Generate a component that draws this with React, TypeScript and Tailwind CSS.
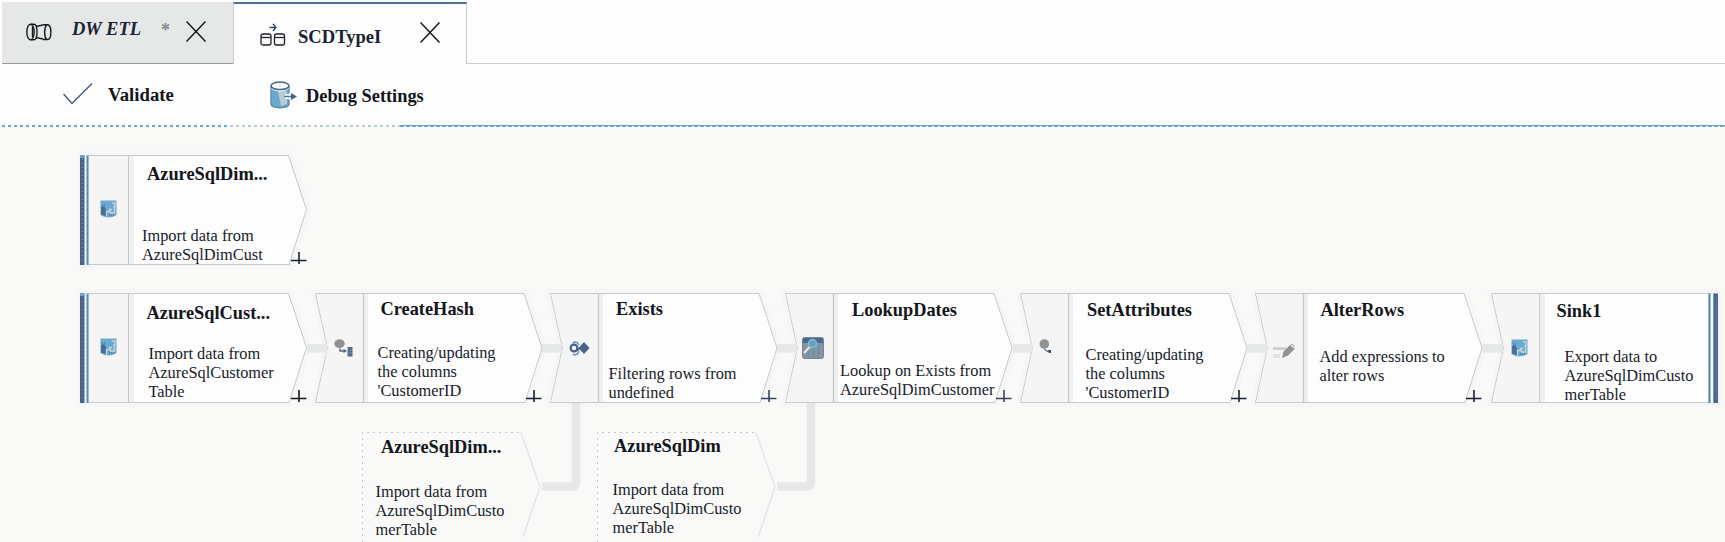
import React from "react";

type IconKind = "sql" | "derive" | "exists" | "lookup" | "set" | "alter" | "none";
type Shape = "source" | "step" | "sink" | "ref";

interface FlowNode {
  id: string;
  shape: Shape;
  x: number;
  y: number;
  title: string;
  tx: number;
  ty: number;
  lines: string[];
  bx: number;
  by: number;
  icon: IconKind;
  plus?: string;
}

const NODES: FlowNode[] = [
  { id: "dim", shape: "source", x: 80, y: 155, title: "AzureSqlDim...", tx: 67, ty: 25, lines: ["Import data from", "AzureSqlDimCust"], bx: 62, by: 86, icon: "sql", plus: "#1b1f2a" },
  { id: "cust", shape: "source", x: 80, y: 293, title: "AzureSqlCust...", tx: 66.5, ty: 26, lines: ["Import data from", "AzureSqlCustomer", "Table"], bx: 68.5, by: 66, icon: "sql", plus: "#14161c" },
  { id: "hash", shape: "step", x: 315, y: 293, title: "CreateHash", tx: 65.5, ty: 22, lines: ["Creating/updating", "the columns", "'CustomerID"], bx: 62.5, by: 65, icon: "derive", plus: "#1b2233" },
  { id: "exists", shape: "step", x: 550, y: 293, title: "Exists", tx: 66, ty: 22, lines: ["Filtering rows from", "undefined"], bx: 58.5, by: 86, icon: "exists", plus: "#35445f" },
  { id: "lookup", shape: "step", x: 785, y: 293, title: "LookupDates", tx: 67, ty: 23, lines: ["Lookup on Exists from", "AzureSqlDimCustomer"], bx: 55, by: 83, icon: "lookup", plus: "#35445f" },
  { id: "set", shape: "step", x: 1020, y: 293, title: "SetAttributes", tx: 67, ty: 23, lines: ["Creating/updating", "the columns", "'CustomerID"], bx: 65.5, by: 67, icon: "set", plus: "#1b2233" },
  { id: "alter", shape: "step", x: 1255, y: 293, title: "AlterRows", tx: 65.5, ty: 23, lines: ["Add expressions to", "alter rows"], bx: 64.5, by: 69, icon: "alter", plus: "#1b2233" },
  { id: "sink", shape: "sink", x: 1490.5, y: 293, title: "Sink1", tx: 66, ty: 23.5, lines: ["Export data to", "AzureSqlDimCusto", "merTable"], bx: 74, by: 69, icon: "sql" },
  { id: "ref1", shape: "ref", x: 362, y: 432, title: "AzureSqlDim...", tx: 19, ty: 21, lines: ["Import data from", "AzureSqlDimCusto", "merTable"], bx: 13.5, by: 65, icon: "none" },
  { id: "ref2", shape: "ref", x: 597, y: 432, title: "AzureSqlDim", tx: 17, ty: 20, lines: ["Import data from", "AzureSqlDimCusto", "merTable"], bx: 15.5, by: 62.5, icon: "none" },
];

function SqlIcon() {
  return (
    <svg width="17" height="18" viewBox="0 0 17 18">
      <path d="M0.5 0.5h16v14.5q-4 2.5-8 2.500t-8-2.500z" fill="#6aa9cf" />
      <path d="M1 7l3-1 2 3 0 7-2.500-.5-2.500-1z" fill="#4a6f98" />
      <path d="M6.500 16.500v-5h3v-2h2.500M12 3h3v4h-2M14.500 8v5h-4v-2" fill="none" stroke="#c9d3da" strokeWidth="1.300" />
      <path d="M2 5h4M3 9h2M9 15h6" stroke="#3f6187" strokeDasharray="1 1" />
    </svg>
  );
}

function NodeIcon({ kind }: { kind: IconKind }) {
  switch (kind) {
    case "sql":
      return <SqlIcon />;
    case "derive":
      return (
        <svg width="19" height="18" viewBox="0 0 19 18">
          <ellipse cx="5.5" cy="4.6" rx="5.2" ry="4.4" fill="#8f9192" />
          <path d="M6 9.5v2.500h5" fill="none" stroke="#566784" strokeWidth="1.4" />
          <path d="M9.5 10l3.500 2-3.500 2z" fill="#4a5f84" />
          <path d="M13.500 8h5v9.500h-5z" fill="#566886" />
          <path d="M14 11h4M14 14h4" stroke="#7b8ba3" />
        </svg>
      );
    case "set":
      return (
        <svg width="19" height="18" viewBox="0 0 19 18">
          <circle cx="5.300" cy="5" r="4.800" fill="#909293" />
          <path d="M5 10l3 2.200 3 .8" fill="none" stroke="#777d86" strokeWidth="1.400" />
          <path d="M8.500 11h3.500v3h-2z" fill="#40506f" />
        </svg>
      );
    case "exists":
      return (
        <svg width="21" height="15" viewBox="0 0 21 15">
          <circle cx="5" cy="7" r="3.400" fill="none" stroke="#47618a" strokeWidth="2.200" />
          <path d="M3.500 1.800Q8-.5 10 4M4 13.200q4 1.800 6-3" fill="none" stroke="#6b8cab" strokeWidth="1.500" />
          <path d="M8 6.500l2 1.500-2 2" fill="none" stroke="#47618a" strokeWidth="1.500" />
          <path d="M15 1l5.500 6-5.500 6-5.500-6z" fill="#48638a" />
        </svg>
      );
    case "lookup":
      return (
        <svg width="22" height="22" viewBox="0 0 22 22">
          <rect x="0.500" y="0.500" width="21" height="21" rx="2" fill="#8b9499" stroke="#6f8799" />
          <path d="M1 1h20v5H1z" fill="#4a688e" />
          <path d="M6.500 9v12M11.500 11v10M16.500 7v14" stroke="#5d93b9" strokeWidth="1.600" />
          <circle cx="10.500" cy="6.500" r="4" fill="#6c9fbe" stroke="#78bde0" strokeWidth="1.500" />
          <path d="M7.500 10L2 16" stroke="#e5eaec" strokeWidth="2" />
        </svg>
      );
    case "alter":
      return (
        <svg width="22" height="17" viewBox="0 0 22 17">
          <path d="M0 5.500h13" stroke="#c4cccf" strokeWidth="2.500" />
          <path d="M0 13h7" stroke="#dfe2e3" strokeWidth="4" />
          <path d="M9 15l1.500-6.500L17 2l4.500 4L15 12.500z" fill="#8f9192" />
          <path d="M18 1.500l3 .5v4" fill="none" stroke="#8f9192" strokeDasharray="2 1" />
        </svg>
      );
    default:
      return null;
  }
}

function NodeOutline({ shape }: { shape: Shape }) {
  const line = "#c3cbcf";
  if (shape === "ref") {
    return (
      <svg className="absolute left-0 top-0" width="180" height="110" viewBox="0 0 180 110">
        <path d="M0.500 110V0.500H159" fill="none" stroke="#c4c7c8" strokeDasharray="2 4" />
        <path d="M159 0.500L178 55L161 105" fill="none" stroke="#dfe2e3" strokeWidth="1.200" />
      </svg>
    );
  }
  if (shape === "source") {
    return (
      <svg className="absolute left-0 top-0 overflow-visible" width="228" height="112" viewBox="0 0 228 112">
        <path d="M2 0.500H208.500L226.500 54.500L209 109.500H2z" fill="#fdfdfd" stroke="#f5f6f5" strokeWidth="9" strokeLinejoin="round" />
        <path d="M8 0.500H208.500L226.500 54.500L209 109.500H8z" fill="#fdfdfd" stroke={line} />
        <path d="M9 1h39v108H9z" fill="#f4f5f4" />
        <path d="M49 1h5v108h-5z" fill="#eff0f0" />
        <path d="M48.500 1v108" stroke={line} />
        <path d="M0 0.500h4.500V110H0z" fill="#4a6388" />
        <path d="M2.500 4v104" stroke="#6b9bc0" strokeDasharray="1 3" />
        <path d="M0 0h4.500v3H0z" fill="#6aa6cb" />
        <path d="M7.500 0.500V110" stroke="#5390bb" strokeWidth="2" />
      </svg>
    );
  }
  if (shape === "sink") {
    return (
      <svg className="absolute left-0 top-0 overflow-visible" width="228" height="112" viewBox="0 0 228 112">
        <path d="M0.500 0.500H226V109.500H0.500L12.500 55z" fill="#fdfdfd" stroke="#f5f6f5" strokeWidth="9" strokeLinejoin="round" />
        <path d="M0.500 0.500H218V109.500H0.500L12.500 55z" fill="#fdfdfd" stroke={line} />
        <path d="M1.500 1H48V109H1.500L13 55z" fill="#f4f5f4" />
        <path d="M49 1h5v108h-5z" fill="#eff0f0" />
        <path d="M48.500 1v108" stroke={line} />
        <path d="M218.500 0.500V110" stroke="#4d86b0" strokeWidth="2" />
        <path d="M222 0.500h5V110h-5z" fill="#4a6388" />
        <path d="M222.500 0.500V110" stroke="#6aa6cb" />
        <path d="M225.500 4v104" stroke="#6b9bc0" strokeDasharray="1 1" />
      </svg>
    );
  }
  return (
    <svg className="absolute left-0 top-0 overflow-visible" width="228" height="112" viewBox="0 0 228 112">
      <path d="M0.500 0.500H209L227 55L210 109.500H0.500L12.500 55z" fill="#fdfdfd" stroke="#f5f6f5" strokeWidth="9" strokeLinejoin="round" />
      <path d="M0.500 0.500H209L227 55L210 109.500H0.500L12.500 55z" fill="#fdfdfd" stroke={line} />
      <path d="M1.500 1H48V109H1.500L13 55z" fill="#f4f5f4" />
      <path d="M49 1h4v108h-4z" fill="#eff0f0" />
      <path d="M48.500 1v108" stroke={line} strokeWidth="1.300" />
    </svg>
  );
}

const ICON_POS: Record<string, string> = {
  dim: "absolute left-[20px] top-[45px]",
  cust: "absolute left-[20px] top-[45px]",
  hash: "absolute left-[19px] top-[46px]",
  exists: "absolute left-[19px] top-[48px]",
  lookup: "absolute left-[17px] top-[44px]",
  set: "absolute left-[19px] top-[46px]",
  alter: "absolute left-[18px] top-[50px]",
  sink: "absolute left-[20px] top-[46px]",
};

function NodeCard({ node }: { node: FlowNode }) {
  return (
    <section className="absolute h-[110px] w-[228px]" style={{ left: node.x, top: node.y - 127 }}>
      <NodeOutline shape={node.shape} />
      {node.icon !== "none" && (
        <span className={ICON_POS[node.id]}>
          <NodeIcon kind={node.icon} />
        </span>
      )}
      <div className="relative flex h-[110px] flex-col whitespace-nowrap">
        <h3
          className="h-5 shrink-0 text-[18.35px] font-bold leading-5 text-[#14161c]"
          style={{ marginLeft: node.tx, marginTop: node.ty - 16 }}
        >
          {node.title}
        </h3>
        <div
          className="shrink-0 text-[16.35px] leading-[19px] text-[#181c2b]"
          style={{ marginLeft: node.bx, marginTop: node.by - 15 - (node.ty + 4) }}
        >
          {node.lines.map((l) => (
            <p key={l}>{l}</p>
          ))}
        </div>
      </div>
      {node.plus && (
        <svg className="absolute left-[211px] top-[97px]" width="16" height="13" viewBox="0 0 16 13">
          <path d="M0 8.500h15.500M8 0v12" stroke={node.plus} strokeWidth="1.600" />
        </svg>
      )}
    </section>
  );
}

function CloseIcon() {
  return (
    <svg width="20" height="21" viewBox="0 0 20 21">
      <path d="M0.500 0.500L19.500 20.500M19.500 0.500L0.500 20.500" stroke="#15171b" strokeWidth="1.500" />
    </svg>
  );
}

function PipelineIcon() {
  return (
    <svg width="26" height="18" viewBox="0 0 26 18" fill="none" stroke="#181a1e" strokeWidth="1.400">
      <ellipse cx="4.500" cy="9" rx="3.700" ry="7.800" />
      <path d="M4.500 1.200h3.500c2 0 3 3 3 7.800s-1 7.800-3 7.800H4.500" />
      <path d="M10 3.500L17 2M10 14.500l7 1.500" />
      <path d="M6.500 4v10" />
      <path d="M17 1.800h4.500c4.500 0 4.500 14.700 0 14.700H17M20.500 2c-2.500 3-2.500 11.500 0 14.500" />
    </svg>
  );
}

function DataflowIcon() {
  return (
    <svg width="26" height="23" viewBox="0 0 26 23" fill="none" stroke="#202329" strokeWidth="1.300">
      <path d="M9.500 4.500h6M13 1l3 3.500L13 8" stroke="#34415c" />
      <rect x="1" y="11" width="10" height="11" rx="2" />
      <path d="M1 14.500h10" />
      <rect x="14.500" y="11" width="10" height="11" rx="2" />
      <path d="M14.500 14.500h10" />
    </svg>
  );
}

function DebugIcon() {
  return (
    <svg width="27" height="28" viewBox="0 0 27 28">
      <path d="M1 5v18c0 5 18 5 18 0V5" fill="#69a9ce" />
      <path d="M8 10h9v13l-6 2z" fill="#b9cbd5" />
      <path d="M1 5v18c0 5 18 5 18 0v-4M19 5v7" fill="none" stroke="#5b86ab" strokeWidth="1.300" />
      <path d="M1.500 5v3q8.500 5 17 0V5z" fill="#fbfbfb" />
      <ellipse cx="10" cy="4.800" rx="9" ry="3.800" fill="#fbfbfb" stroke="#47678d" strokeWidth="1.500" />
      <path d="M15 15.500h6" stroke="#fbfbfb" strokeWidth="5" />
      <path d="M14 15.500h8" stroke="#4c779f" strokeWidth="1.500" />
      <path d="M21 12l6 3.500-6 3.500z" fill="#42628a" />
    </svg>
  );
}

function Connectors() {
  return (
    <svg className="absolute left-0 top-0" width="1725" height="415" viewBox="0 127 1725 415" fill="none" stroke="#e6e8e8" strokeWidth="8.500">
      <path d="M307 348.300H327M542 348.300H562M777.500 348.300H797M1012.500 348.300H1032M1247.500 348.300H1267M1482.500 348.300H1502.500" />
      <path d="M542 486.500H572Q576 486.500 576 482.500V403" />
      <path d="M777 486.500H807Q811 486.500 811 482.500V403" />
    </svg>
  );
}

export default function App() {
  return (
    <div className="flex h-[542px] w-[1725px] flex-col overflow-hidden bg-[#fdfdfd] font-['Liberation_Serif',serif] text-[#14161c]">
      <header className="flex h-16 shrink-0 pl-[2px] pt-[2px]">
        <div className="flex w-[231px] items-start border-b border-[#999c9e] bg-[#e6e8e8]">
          <span className="ml-6 mt-[21px]"><PipelineIcon /></span>
          <span className="ml-5 mt-[17px] w-[89px] whitespace-nowrap text-[18.5px] font-bold italic leading-5 text-[#1b2233]">DW ETL</span>
          <span className="mt-[18px] w-[25px] text-[18px] font-bold leading-5 text-[#85878a]">*</span>
          <span className="mt-[19px]"><CloseIcon /></span>
        </div>
        <div className="flex w-[234px] items-start border-x border-t-2 border-x-[#c6cbce] border-t-[#4a719c] bg-[#fdfdfd]">
          <span className="ml-[26px] mt-[19px]"><DataflowIcon /></span>
          <span className="ml-3 mt-[23px] w-[122px] text-[18.6px] font-bold leading-5 text-[#1b2233]">SCDTypeI</span>
          <span className="mt-[18px]"><CloseIcon /></span>
        </div>
        <div className="grow border-b border-[#c9cccd]" />
      </header>
      <nav className="flex h-[61px] shrink-0 items-start">
        <div className="flex w-[270px] pl-[63px]">
          <svg className="mt-[19px]" width="30" height="22" viewBox="0 0 30 22">
            <path d="M0.500 11L9 20.500L29 0.500" fill="none" stroke="#425b82" strokeWidth="1.400" />
          </svg>
          <span className="ml-[15px] mt-[21px] text-[18.7px] font-bold leading-5">Validate</span>
        </div>
        <div className="flex">
          <span className="mt-[17px]"><DebugIcon /></span>
          <span className="ml-[9px] mt-[22px] whitespace-nowrap text-[18.35px] font-bold leading-5">Debug Settings</span>
        </div>
      </nav>
      <svg className="block shrink-0" width="1725" height="2" viewBox="0 0 1725 2">
        <path d="M2 1H230" stroke="#6aa9cf" strokeWidth="2" strokeDasharray="3 3" />
        <path d="M230 1H400" stroke="#b9c7cf" strokeWidth="2" strokeDasharray="3 3" />
        <path d="M400 0.500H1725" stroke="#66a6cd" />
        <path d="M400 1.500H1725" stroke="#66a6cd" strokeDasharray="4 2" />
      </svg>
      <main className="relative grow overflow-hidden bg-[#f9f9f8]">
        {NODES.map((n) => (
          <NodeCard key={n.id} node={n} />
        ))}
        <Connectors />
      </main>
    </div>
  );
}
